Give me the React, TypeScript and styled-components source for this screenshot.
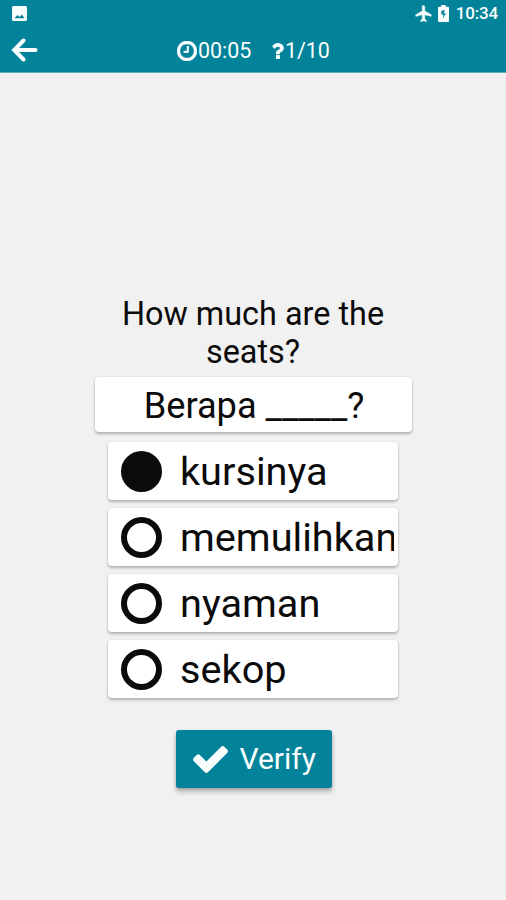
import React from "react";
import styled, { createGlobalStyle } from "styled-components";

const GlobalStyle = createGlobalStyle`
  * { box-sizing: border-box; }
  body { margin: 0; background: #f1f1f1; font-family: Roboto, sans-serif; color: #0b0b0b; }
`;

const Screen = styled.div`
  width: 506px;
  height: 900px;
  display: flex;
  flex-direction: column;
  overflow: hidden;
  background: #f1f1f1;
`;

const Header = styled.header`
  height: 73px;
  flex: none;
  background: #028399;
  border-bottom: 1px solid #62abb8;
  color: #fafefe;
`;

const StatusBar = styled.div`
  height: 28px;
  display: flex;
  align-items: center;
  padding: 0 8px 2px 12px;
`;

const StatusIcons = styled.div`
  margin-left: auto;
  display: flex;
  align-items: center;
  gap: 6px;
`;

const Clock = styled.span`
  margin-left: 1px;
  font-size: 17px;
  font-weight: 500;
  line-height: 26px;
  letter-spacing: -0.2px;
`;

const TitleBar = styled.div`
  height: 44px;
  display: grid;
  grid-template-columns: 177px 94px auto;
  align-items: center;
`;

const BackButton = styled.button`
  width: 48px;
  height: 44px;
  padding: 0 0 2px 11px;
  border: 0;
  background: none;
  display: flex;
  align-items: center;
`;

const Stat = styled.div<{ $gap: number }>`
  display: flex;
  align-items: center;
  gap: ${(p) => p.$gap}px;
  padding-top: 1px;
  font-size: 21.4px;
  line-height: 44px;
  white-space: nowrap;
`;

const Quiz = styled.main`
  flex: 1;
  display: flex;
  flex-direction: column;
  align-items: center;
  padding-top: 222px;
`;

const Question = styled.h1`
  width: 300px;
  margin: 0;
  font-size: 32.4px;
  line-height: 38px;
  font-weight: 400;
  text-align: center;
`;

const Card = styled.div`
  background: #fff;
  border-radius: 4px;
  box-shadow: 0 2px 3px rgba(0, 0, 0, 0.26), 0 0 2px rgba(0, 0, 0, 0.1);
`;

const Sentence = styled(Card)`
  width: 317px;
  height: 55px;
  margin-top: 6px;
  padding-left: 2px;
  font-size: 36.2px;
  line-height: 58px;
  text-align: center;
  white-space: nowrap;
`;

const Options = styled.div`
  width: 290px;
  margin-top: 10px;
  display: flex;
  flex-direction: column;
  gap: 8px;
`;

const Option = styled(Card)`
  height: 58px;
  display: flex;
  align-items: center;
  padding: 0 4px 0 13px;
`;

const Radio = styled.span<{ $checked: boolean }>`
  width: 41px;
  height: 41px;
  flex: none;
  border: 6px solid #0b0b0b;
  border-radius: 50%;
  background: ${(p) => (p.$checked ? "#0b0b0b" : "#fff")};
`;

const Label = styled.span`
  flex: 1;
  min-width: 0;
  margin-left: 18px;
  padding-top: 2px;
  overflow: hidden;
  white-space: nowrap;
  font-size: 39.7px;
  line-height: 56px;
`;

const VerifyButton = styled.button`
  width: 156px;
  height: 58px;
  margin: 32px 0 0 1px;
  padding: 0 0 0 17px;
  display: flex;
  align-items: center;
  gap: 12px;
  border: 0;
  border-radius: 3px;
  background: #028399;
  color: #fafefe;
  font: 400 30px/58px Roboto, sans-serif;
  box-shadow: 0 4px 5px rgba(0, 0, 0, 0.24), 0 1px 3px rgba(0, 0, 0, 0.16);
`;

const PictureIcon = () => (
  <svg width="15" height="15" viewBox="0 0 15 15">
    <path fill="#fafefe" fillRule="evenodd" d="M1.500 0h12A1.500 1.500 0 0 1 15 1.500v12a1.500 1.500 0 0 1-1.500 1.500h-12A1.500 1.500 0 0 1 0 13.500v-12A1.500 1.500 0 0 1 1.500 0zM2.500 12.200h10L9.800 8.400 7.600 11 5.300 9z" />
  </svg>
);

const AirplaneIcon = () => (
  <svg width="17" height="17" viewBox="1.500 1.500 20 21" fill="currentColor" stroke="currentColor" strokeWidth="0.700">
    <path d="M21 15.500v-2l-8-4.500V3.500c0-.83-.67-1.500-1.500-1.500S10 2.670 10 3.500V9l-8 4.500v2l8-2V19l-2 1.500V22l3.500-1 3.500 1v-1.500L13 19v-5.500z" />
  </svg>
);

const BatteryIcon = () => (
  <svg width="11" height="17" viewBox="0 0 11 17">
    <path fill="#fafefe" fillRule="evenodd" d="M3.300 0h4.400v1.700H10a1 1 0 0 1 1 1V16a1 1 0 0 1-1 1H1a1 1 0 0 1-1-1V2.700a1 1 0 0 1 1-1h2.300zM6.800 5 3.500 5.800 3.200 9.600h2.200L4.800 13.500 7.900 8.600 5.800 8.300z" />
  </svg>
);

const BackIcon = () => (
  <svg width="27" height="24" viewBox="0 0 27 24" fill="none" stroke="#fafefe" strokeWidth="4">
    <path strokeLinecap="round" d="M12.500 2.500 3.200 12l9.300 9.500" />
    <path strokeLinecap="round" d="M4 12h20.500" />
  </svg>
);

const ClockIcon = () => (
  <svg width="20" height="20" viewBox="128 128 1536 1536" fill="currentColor" stroke="currentColor" strokeWidth="30">
    <path d="M1024 544v448q0 14-9 23t-23 9h-320q-14 0-23-9t-9-23v-64q0-14 9-23t23-9h224v-352q0-14 9-23t23-9h64q14 0 23 9t9 23zm416 352q0-148-73-273t-198-198-273-73-273 73-198 198-73 273 73 273 198 198 273 73 273-73 198-198 73-273zm224 0q0 209-103 385.500t-279.500 279.500-385.500 103-385.500-103-279.500-279.500-103-385.500 103-385.500 279.500-279.500 385.500-103 385.500 103 279.500 279.500 103 385.500z" />
  </svg>
);

const QuestionIcon = () => (
  <svg width="13" height="16" viewBox="384 256 1024 1280" fill="currentColor">
    <path d="M1088 1256v240q0 16-12 28t-28 12h-240q-16 0-28-12t-12-28v-240q0-16 12-28t28-12h240q16 0 28 12t12 28zm316-600q0 54-15.500 101t-35 76.500-55 59.500-57.500 43.500-61 35.500q-41 23-68.500 65t-27.500 67q0 17-12 32.500t-28 15.500h-240q-15 0-25.500-18.500t-10.500-37.500v-45q0-83 65-156.500t143-108.500q59-27 84-56t25-76q0-42-46.500-74t-107.500-32q-65 0-108 29-35 25-107 115-13 16-31 16-12 0-25-8l-164-125q-13-10-15.500-25t5.500-28q160-266 464-266 80 0 161 31t146 83 106 127.500 41 158.500z" />
  </svg>
);

const CheckIcon = () => (
  <svg width="35" height="27" viewBox="121 334 1550 1188" fill="currentColor">
    <path d="M1671 566q0 40-28 68l-724 724-136 136q-28 28-68 28t-68-28l-136-136-362-362q-28-28-28-68t28-68l136-136q28-28 68-28t68 28l294 295 656-657q28-28 68-28t68 28l136 136q28 28 28 68z" />
  </svg>
);

const answers = ["kursinya", "memulihkan", "nyaman", "sekop"];

export default function App() {
  return (
    <Screen>
      <GlobalStyle />
      <Header>
        <StatusBar>
          <PictureIcon />
          <StatusIcons>
            <AirplaneIcon />
            <BatteryIcon />
            <Clock>10:34</Clock>
          </StatusIcons>
        </StatusBar>
        <TitleBar>
          <BackButton aria-label="Back">
            <BackIcon />
          </BackButton>
          <Stat $gap={1}>
            <ClockIcon />
            00:05
          </Stat>
          <Stat $gap={1}>
            <QuestionIcon />
            1/10
          </Stat>
        </TitleBar>
      </Header>
      <Quiz>
        <Question>How much are the seats?</Question>
        <Sentence>Berapa _____?</Sentence>
        <Options role="radiogroup">
          {answers.map((answer, i) => (
            <Option key={answer} role="radio" aria-checked={i === 0}>
              <Radio $checked={i === 0} />
              <Label>{answer}</Label>
            </Option>
          ))}
        </Options>
        <VerifyButton>
          <CheckIcon />
          Verify
        </VerifyButton>
      </Quiz>
    </Screen>
  );
}
